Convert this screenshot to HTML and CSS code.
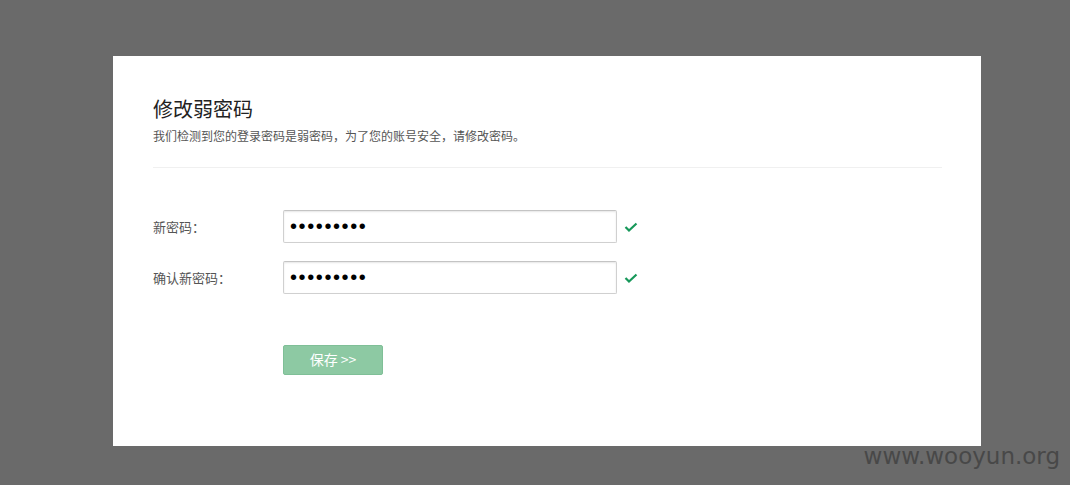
FILE: index.html
```html
<!DOCTYPE html>
<html lang="zh-CN">
<head>
    <meta charset="UTF-8">
    <title>修改弱密码</title>
    <link rel="stylesheet" href="styles.css">
</head>
<body>
    <div class="dialog">
        <h1 class="title">修改弱密码</h1>
        <p class="subtitle">我们检测到您的登录密码是弱密码，为了您的账号安全，请修改密码。</p>

        <form class="form">
            <div class="row">
                <label class="label">新密码：</label>
                <input class="field" type="password" value="123456789">
                <svg class="ok" width="14" height="12" viewBox="0 0 14 12"><polyline points="1.5,6 5,9.5 12.5,2.5" fill="none" stroke="#17985a" stroke-width="2.2"/></svg>
            </div>
            <div class="row">
                <label class="label">确认新密码：</label>
                <input class="field" type="password" value="123456789">
                <svg class="ok" width="14" height="12" viewBox="0 0 14 12"><polyline points="1.5,6 5,9.5 12.5,2.5" fill="none" stroke="#17985a" stroke-width="2.2"/></svg>
            </div>
            <div class="actions">
                <button type="button" class="save">保存 &gt;&gt;</button>
            </div>
        </form>
    </div>

    <div class="watermark">www.wooyun.org</div>
</body>
</html>
```

FILE: styles.css
```css
* {
    margin: 0;
    padding: 0;
    box-sizing: border-box;
}

body {
    background: #6a6a6a;
    font-family: "Liberation Sans", "Noto Sans CJK SC", sans-serif;
    height: 485px;
    overflow: hidden;
    position: relative;
}

.dialog {
    margin: 56px 0 0 113px;
    width: 868px;
    height: 390px;
    background: #fff;
    padding: 40px 39px 0 40px;
}

.title {
    font-size: 20px;
    font-weight: normal;
    line-height: 28px;
    color: #222;
}

.subtitle {
    margin-top: 4px;
    font-size: 12px;
    line-height: 18px;
    color: #555;
    padding-bottom: 21px;
    border-bottom: 1px solid #f0f0f0;
}

.form {
    padding-top: 42px;
}

.row {
    display: flex;
    align-items: center;
    margin-bottom: 18px;
}

.label {
    width: 130px;
    font-size: 13px;
    color: #555;
}

.field {
    width: 334px;
    height: 33px;
    border: 1px solid #d0d0d0;
    border-top-color: #c4c4c4;
    border-radius: 2px;
    box-shadow: inset 0 1px 2px rgba(0, 0, 0, 0.1);
    padding: 0 6px;
    font-size: 20px;
    letter-spacing: 1.6px;
    color: #000;
    outline: none;
}

.ok {
    margin-left: 7px;
}

.actions {
    padding: 33px 0 0 130px;
}

.save {
    width: 100px;
    height: 30px;
    background: #8dc9a3;
    border: 1px solid #7fbf97;
    border-radius: 2px;
    color: #fff;
    font-family: "Noto Sans CJK SC", sans-serif;
    font-size: 14px;
    line-height: 26px;
    padding-bottom: 2px;
}

.watermark {
    position: absolute;
    right: 10px;
    bottom: 16px;
    font-family: "DejaVu Sans", sans-serif;
    font-size: 23px;
    color: #484848;
}
```
